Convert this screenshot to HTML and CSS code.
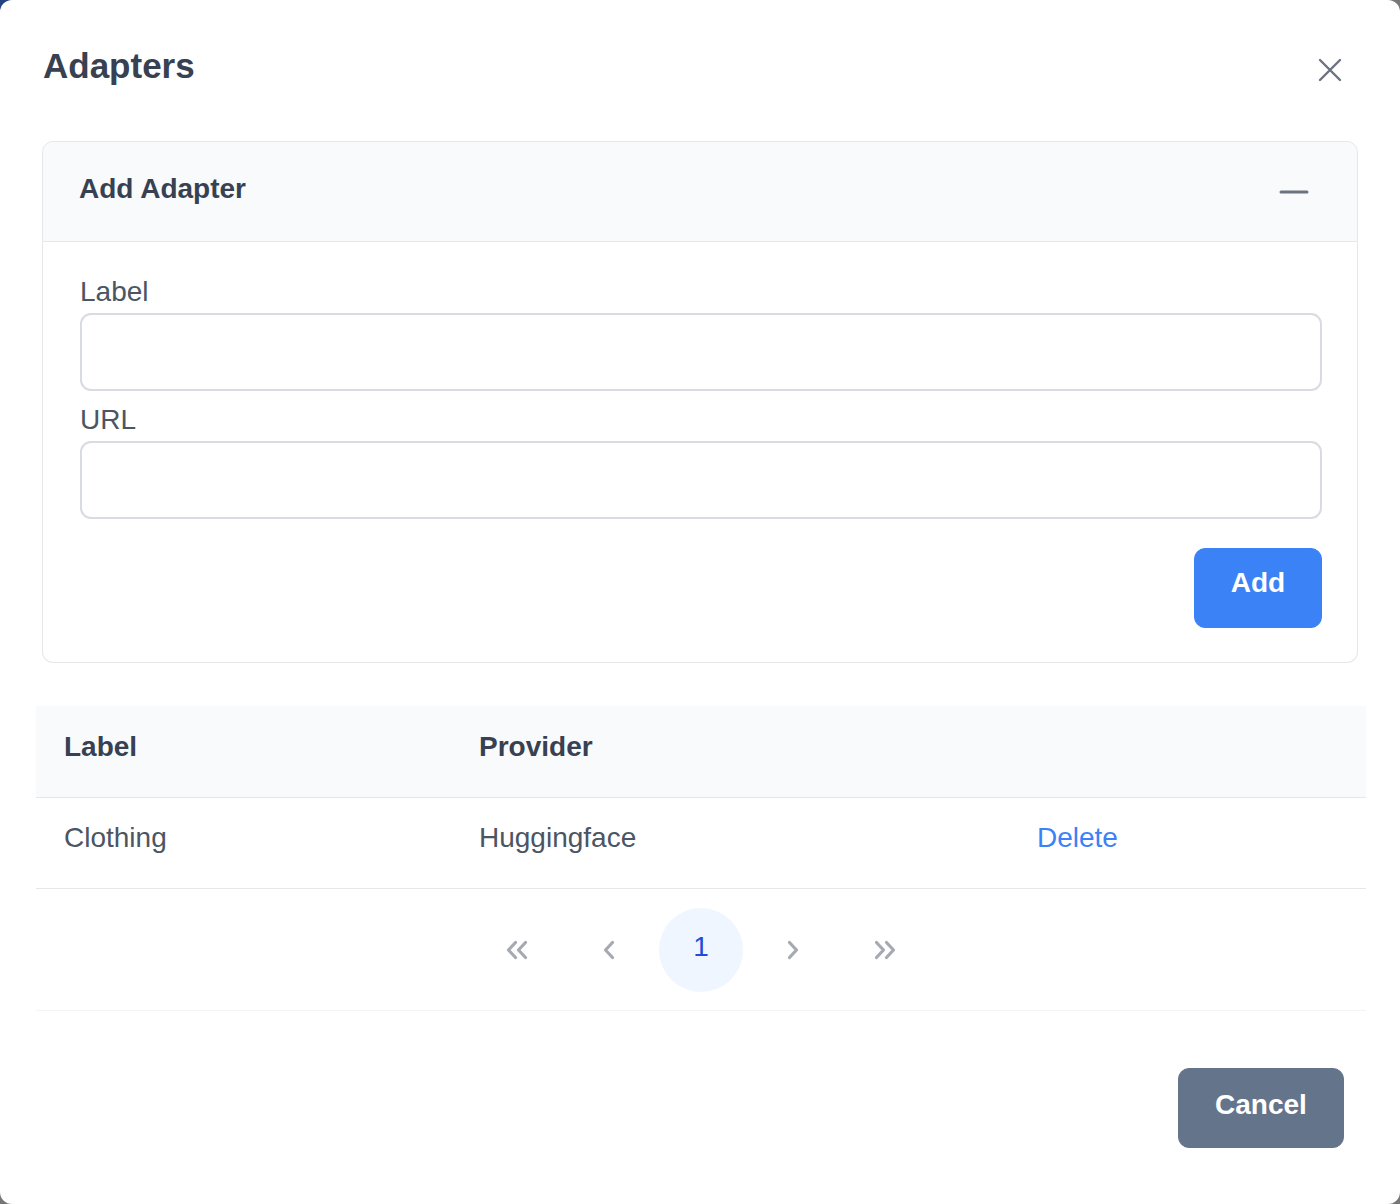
FILE: index.html
```html
<!DOCTYPE html>
<html lang="en">
<head>
<meta charset="utf-8">
<title>Adapters</title>
<link rel="stylesheet" href="styles.css">
</head>
<body>
<div class="dialog">
  <div class="dialog-header">
    <h1 class="dialog-title">Adapters</h1>
    <button class="icon-btn close-btn" aria-label="Close">
      <svg width="24" height="24" viewBox="0 0 24 24"><path d="M2 2 L22 22 M22 2 L2 22" stroke="#6b7280" stroke-width="2.4" stroke-linecap="round" fill="none"/></svg>
    </button>
  </div>
  <div class="dialog-content">
    <div class="panel">
      <div class="panel-header">
        <span class="panel-title">Add Adapter</span>
        <button class="icon-btn toggle-btn" aria-label="Collapse">
          <svg width="30" height="6" viewBox="0 0 30 6"><path d="M2 3 H28" stroke="#6b7280" stroke-width="3" stroke-linecap="round"/></svg>
        </button>
      </div>
      <div class="panel-content">
        <div class="field">
          <label class="field-label" for="label">Label</label>
          <input class="text-input" id="label" type="text">
        </div>
        <div class="field second">
          <label class="field-label" for="url">URL</label>
          <input class="text-input" id="url" type="text">
        </div>
        <div class="actions">
          <button class="btn btn-primary">Add</button>
        </div>
      </div>
    </div>

    <div class="table-wrap">
      <table class="data-table">
        <colgroup><col class="c1"><col class="c2"><col class="c3"></colgroup>
        <thead>
          <tr><th>Label</th><th>Provider</th><th></th></tr>
        </thead>
        <tbody>
          <tr><td>Clothing</td><td>Huggingface</td><td><a class="link" href="#">Delete</a></td></tr>
        </tbody>
      </table>
      <div class="paginator">
        <button class="page-btn nav" aria-label="First">
          <svg width="24" height="24" viewBox="0 0 24 24"><path d="M10.5 4.5 L3.5 12 L10.5 19.5 M20.5 4.5 L13.5 12 L20.5 19.5" stroke="#6b7280" stroke-width="3.2" stroke-linecap="round" stroke-linejoin="round" fill="none"/></svg>
        </button>
        <button class="page-btn nav" aria-label="Previous">
          <svg width="24" height="24" viewBox="0 0 24 24"><path d="M15.5 4.5 L8.5 12 L15.5 19.5" stroke="#6b7280" stroke-width="3.2" stroke-linecap="round" stroke-linejoin="round" fill="none"/></svg>
        </button>
        <button class="page-btn active">1</button>
        <button class="page-btn nav" aria-label="Next">
          <svg width="24" height="24" viewBox="0 0 24 24"><path d="M8.5 4.5 L15.5 12 L8.5 19.5" stroke="#6b7280" stroke-width="3.2" stroke-linecap="round" stroke-linejoin="round" fill="none"/></svg>
        </button>
        <button class="page-btn nav" aria-label="Last">
          <svg width="24" height="24" viewBox="0 0 24 24"><path d="M3.5 4.5 L10.5 12 L3.5 19.5 M13.5 4.5 L20.5 12 L13.5 19.5" stroke="#6b7280" stroke-width="3.2" stroke-linecap="round" stroke-linejoin="round" fill="none"/></svg>
        </button>
      </div>
    </div>
  </div>
  <div class="dialog-footer">
    <button class="btn btn-secondary">Cancel</button>
  </div>
</div>
</body>
</html>
```
FILE: styles.css
```css
* { box-sizing: border-box; }

html, body {
  margin: 0;
  padding: 0;
}

body {
  width: 1400px;
  height: 1204px;
  background: radial-gradient(circle at 0 0, #24427f 0, #24427f 8px, #777 16px, #777 100%);
  font-family: "Liberation Sans", Arial, Helvetica, sans-serif;
  color: #4b5563;
  font-size: 28px;
  overflow: hidden;
}

.dialog {
  width: 1400px;
  height: 1204px;
  background: #ffffff;
  border-radius: 12px;
  display: flex;
  flex-direction: column;
  overflow: hidden;
}

.dialog-header {
  display: flex;
  justify-content: space-between;
  align-items: flex-start;
  padding: 42px 42px 43px 43px;
}

.dialog-title {
  margin: 0;
  font-size: 35px;
  line-height: 48px;
  font-weight: 700;
  color: #374151;
}

.icon-btn {
  border: none;
  background: transparent;
  padding: 0;
  display: flex;
  align-items: center;
  justify-content: center;
  cursor: pointer;
}

.close-btn {
  width: 56px;
  height: 56px;
  border-radius: 50%;
}

.dialog-content {
  flex: 1;
  padding: 0 42px 57px 42px;
}

.panel {
  width: 100%;
}

.panel-header {
  display: flex;
  align-items: center;
  justify-content: space-between;
  height: 101px;
  padding: 0 35px 0 36px;
  background: #f9fafb;
  border: 1px solid #e5e7eb;
  border-radius: 11px 11px 0 0;
}

.panel-title {
  font-weight: 700;
  font-size: 28px;
  line-height: 32px;
  color: #374151;
  margin-bottom: 5px;
}

.toggle-btn {
  width: 56px;
  height: 56px;
}

.panel-content {
  border: 1px solid #e5e7eb;
  border-top: none;
  border-radius: 0 0 11px 11px;
  padding: 34px 35px 34px 37px;
}

.field {
  display: flex;
  flex-direction: column;
}

.field.second {
  margin-top: 13px;
}

.field-label {
  font-size: 28px;
  line-height: 32px;
  color: #4b5563;
  margin-bottom: 5px;
}

.text-input {
  width: 100%;
  height: 78px;
  border: 2px solid #d8dbe0;
  border-radius: 11px;
  background: #ffffff;
  font-family: inherit;
  font-size: 28px;
  padding: 0 21px;
  outline: none;
}

.actions {
  display: flex;
  justify-content: flex-end;
  margin-top: 29px;
}

.btn {
  font-family: inherit;
  font-size: 28px;
  font-weight: 700;
  color: #ffffff;
  height: 80px;
  border-radius: 11px;
  display: flex;
  align-items: center;
  justify-content: center;
  cursor: pointer;
  padding: 0;
  line-height: 32px;
}

.btn-primary {
  width: 128px;
  background: #3b82f6;
  border: 1px solid #3b82f6;
  padding-bottom: 10px;
}

.btn-secondary {
  width: 166px;
  background: #64748b;
  border: 1px solid #64748b;
  padding-bottom: 6px;
}

.table-wrap {
  margin: 43px -8px 0 -6px;
}

.data-table {
  width: 100%;
  border-collapse: collapse;
  table-layout: fixed;
}

.c1 { width: 415px; }
.c2 { width: 558px; }
.c3 { width: 357px; }

.data-table th {
  text-align: left;
  background: #f9fafb;
  color: #374151;
  font-weight: 700;
  font-size: 28px;
  line-height: 32px;
  padding: 25px 28px 34px 28px;
  border-bottom: 1px solid #e5e7eb;
}

.data-table td {
  text-align: left;
  color: #4b5563;
  font-size: 28px;
  line-height: 32px;
  padding: 24px 28px 34px 28px;
  border-bottom: 1px solid #e5e7eb;
}

.link {
  color: #3b82f6;
  text-decoration: none;
}

.paginator {
  display: flex;
  justify-content: center;
  align-items: center;
  padding: 19px 0 18px 0;
  border-bottom: 1px solid #f3f4f6;
}

.page-btn {
  width: 84px;
  height: 84px;
  margin: 0 4px;
  border: none;
  border-radius: 50%;
  background: transparent;
  display: flex;
  align-items: center;
  justify-content: center;
  font-family: inherit;
  font-size: 28px;
  padding: 0;
}

.page-btn.nav svg {
  opacity: 0.6;
}

.page-btn.active {
  background: #eff6ff;
  color: #1d4ed8;
  padding-bottom: 6px;
}

.dialog-footer {
  display: flex;
  justify-content: flex-end;
  padding: 0 56px 56px 0;
}
```
